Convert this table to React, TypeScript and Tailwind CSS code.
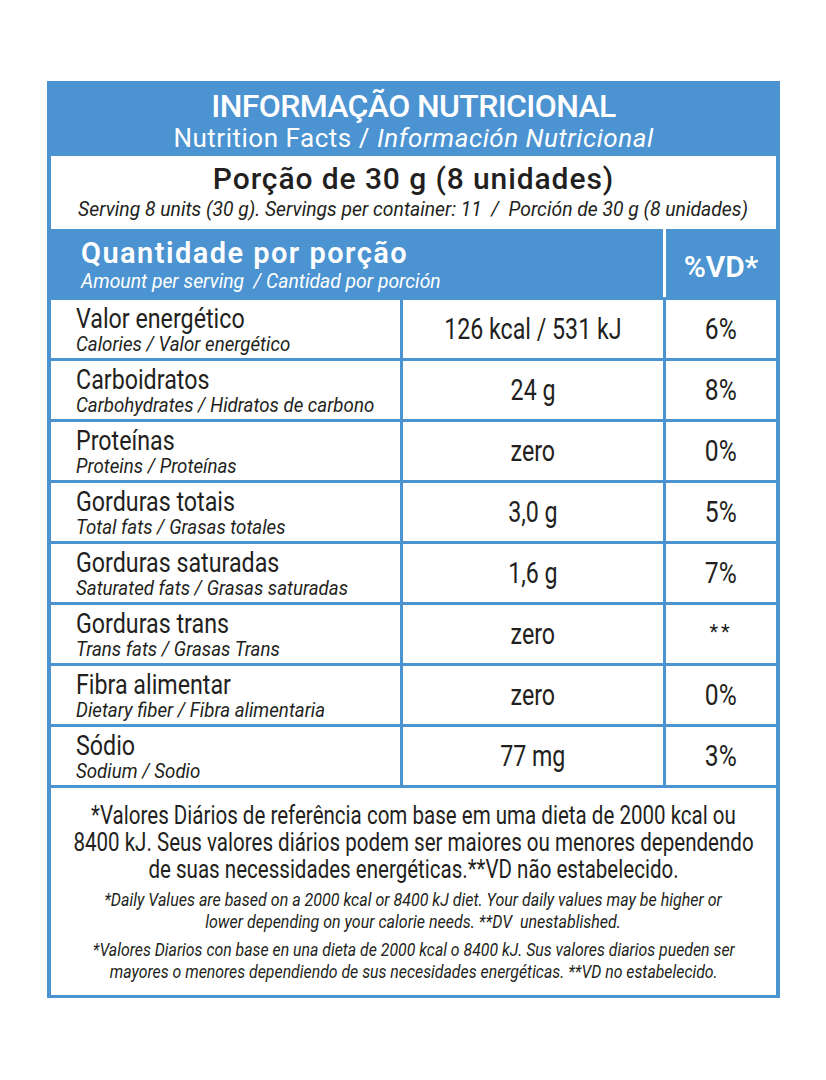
const rows = [
  { pt: 'Valor energético', sub: 'Calories / Valor energético', value: '126 kcal / 531 kJ', vd: '6%' },
  { pt: 'Carboidratos', sub: 'Carbohydrates / Hidratos de carbono', value: '24 g', vd: '8%' },
  { pt: 'Proteínas', sub: 'Proteins / Proteínas', value: 'zero', vd: '0%' },
  { pt: 'Gorduras totais', sub: 'Total fats / Grasas totales', value: '3,0 g', vd: '5%' },
  { pt: 'Gorduras saturadas', sub: 'Saturated fats / Grasas saturadas', value: '1,6 g', vd: '7%' },
  { pt: 'Gorduras trans', sub: 'Trans fats / Grasas Trans', value: 'zero', vd: '**' },
  { pt: 'Fibra alimentar', sub: 'Dietary fiber / Fibra alimentaria', value: 'zero', vd: '0%' },
  { pt: 'Sódio', sub: 'Sodium / Sodio', value: '77 mg', vd: '3%' },
];

// no condensed face is installed, so narrow text is Roboto squeezed with scale-x
export default function App() {
  return (
    <div className="min-h-screen bg-white pt-[81px] pl-[47px] text-[#231f20] font-['Roboto',sans-serif]">
      <div className="w-[733px] bg-[#4b93d1] px-[4px] pb-[3px]">
        {/* title */}
        <div className="h-[75px] flex flex-col items-center text-white">
          <div className="mt-[9px] text-[32px] leading-none font-medium tracking-[-0.02em]">INFORMAÇÃO NUTRICIONAL</div>
          <div className="mt-[3px] text-[26px] leading-none tracking-[0.02em]">
            Nutrition Facts / <span className="italic">Información Nutricional</span>
          </div>
        </div>

        {/* serving */}
        <div className="h-[73px] bg-white flex flex-col items-center">
          <div className="mt-[8px] text-[30px] leading-none font-medium tracking-[0.03em]">Porção de 30 g (8 unidades)</div>
          <div className="mt-[5px] text-[21px] leading-none italic whitespace-nowrap scale-x-[0.92]">
            Serving 8 units (30 g). Servings per container: 11&nbsp; / &nbsp;Porción de 30 g (8 unidades)
          </div>
        </div>

        {/* column header */}
        <div className="grid grid-cols-[612px_110px] gap-x-[3px] bg-white h-[68px]">
          <div className="bg-[#4b93d1] text-white pl-[30px] pt-[10px]">
            <div className="text-[29px] leading-none font-semibold tracking-[0.05em]">Quantidade por porção</div>
            <div className="mt-[3px] text-[21px] leading-none italic whitespace-nowrap origin-left scale-x-[0.92]">
              Amount per serving&nbsp; / Cantidad por porción
            </div>
          </div>
          <div className="bg-[#4b93d1] text-white flex items-center justify-center pt-[8px]">
            <span className="text-[30px] leading-none font-semibold">%VD*</span>
          </div>
        </div>

        {/* nutrients */}
        <div className="mt-[3px] grid grid-cols-[349px_260px_110px] gap-[3px]">
          {rows.map((r) => (
            <div key={r.pt} className="contents">
              <div className="h-[58px] bg-white pl-[25px] pt-[5px]">
                <div className="text-[28px] leading-none whitespace-nowrap origin-left scale-x-[0.83]">{r.pt}</div>
                <div className="mt-[1px] text-[21px] leading-none italic whitespace-nowrap origin-left scale-x-[0.89]">{r.sub}</div>
              </div>
              <div className="h-[58px] bg-white flex items-center justify-center">
                <span className="text-[29px] leading-none whitespace-nowrap scale-x-[0.8]">{r.value}</span>
              </div>
              <div className="h-[58px] bg-white flex items-center justify-center">
                {r.vd === '**' ? (
                  <span className="text-[20px] leading-none tracking-[0.15em] pb-[4px]">**</span>
                ) : (
                  <span className="text-[29px] leading-none scale-x-[0.85]">{r.vd}</span>
                )}
              </div>
            </div>
          ))}
        </div>

        {/* footnotes */}
        <div className="mt-[3px] h-[207px] bg-white flex flex-col items-center text-center pt-[14px] overflow-hidden">
          <div className="text-[26px] leading-[27px] scale-x-[0.79]">
            <div className="whitespace-nowrap">*Valores Diários de referência com base em uma dieta de 2000 kcal ou</div>
            <div className="whitespace-nowrap">8400 kJ. Seus valores diários podem ser maiores ou menores dependendo</div>
            <div className="whitespace-nowrap">de suas necessidades energéticas.**VD não estabelecido.</div>
          </div>
          <div className="mt-[6px] text-[18px] leading-[22px] italic scale-x-[0.89]">
            <div className="whitespace-nowrap">*Daily Values are based on a 2000 kcal or 8400 kJ diet. Your daily values may be higher or</div>
            <div className="whitespace-nowrap">lower depending on your calorie needs. **DV&nbsp; unestablished.</div>
          </div>
          <div className="mt-[6px] text-[18px] leading-[22px] italic scale-x-[0.88]">
            <div className="whitespace-nowrap">*Valores Diarios con base en una dieta de 2000 kcal o 8400 kJ. Sus valores diarios pueden ser</div>
            <div className="whitespace-nowrap">mayores o menores dependiendo de sus necesidades energéticas. **VD no estabelecido.</div>
          </div>
        </div>
      </div>
    </div>
  );
}
